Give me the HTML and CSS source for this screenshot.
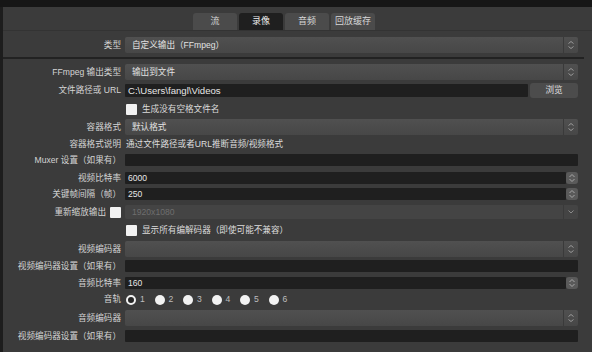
FILE: index.html
```html
<!DOCTYPE html>
<html>
<head>
  <title>输出设置 - 录像</title>
  <link rel="stylesheet" href="styles.css">
</head>
<body>

  <div class="window">
    <div class="tabs">
      <div class="tab">流</div>
      <div class="tab active">录像</div>
      <div class="tab">音频</div>
      <div class="tab">回放缓存</div>
    </div>

    <div class="form">
      <div class="row wide">
        <div class="lbl">类型</div>
        <div class="combo"><span class="combo-text">自定义输出（FFmpeg）</span><span class="combo-btn"><svg width="8" height="10" viewBox="0 0 8 10"><path d="M1.5 3.5 L4 1.5 L6.5 3.5 M1.5 6.5 L4 8.5 L6.5 6.5" fill="none" stroke="#9a9a9a" stroke-width="1"/></svg></span></div>
      </div>

      <div class="sep"></div>

      <div class="row loose">
        <div class="lbl">FFmpeg 输出类型</div>
        <div class="combo"><span class="combo-text">输出到文件</span><span class="combo-btn"><svg width="8" height="10" viewBox="0 0 8 10"><path d="M1.5 3.5 L4 1.5 L6.5 3.5 M1.5 6.5 L4 8.5 L6.5 6.5" fill="none" stroke="#9a9a9a" stroke-width="1"/></svg></span></div>
      </div>

      <div class="row close">
        <div class="lbl">文件路径或 URL</div>
        <div class="path">
          <div class="input path-input">C:\Users\fangl\Videos</div>
          <div class="btn">浏览</div>
        </div>
      </div>

      <div class="row loose check-row">
        <div class="lbl"></div>
        <div class="check"><span class="box"></span>生成没有空格文件名</div>
      </div>

      <div class="row">
        <div class="lbl">容器格式</div>
        <div class="combo"><span class="combo-text">默认格式</span><span class="combo-btn"><svg width="8" height="10" viewBox="0 0 8 10"><path d="M1.5 3.5 L4 1.5 L6.5 3.5 M1.5 6.5 L4 8.5 L6.5 6.5" fill="none" stroke="#9a9a9a" stroke-width="1"/></svg></span></div>
      </div>

      <div class="row close text-row">
        <div class="lbl">容器格式说明</div>
        <div class="note">通过文件路径或者URL推断音频/视频格式</div>
      </div>

      <div class="row">
        <div class="lbl">Muxer 设置（如果有）</div>
        <div class="input"></div>
      </div>

      <div class="row wide">
        <div class="lbl">视频比特率</div>
        <div class="spin"><div class="input">6000</div><span class="spin-btn"><svg width="8" height="10" viewBox="0 0 8 10"><path d="M1.5 4 L4 1.5 L6.5 4 M1.5 6 L4 8.5 L6.5 6" fill="none" stroke="#a8a8a8" stroke-width="1"/></svg></span></div>
      </div>

      <div class="row">
        <div class="lbl">关键帧间隔（帧）</div>
        <div class="spin"><div class="input">250</div><span class="spin-btn"><svg width="8" height="10" viewBox="0 0 8 10"><path d="M1.5 4 L4 1.5 L6.5 4 M1.5 6 L4 8.5 L6.5 6" fill="none" stroke="#a8a8a8" stroke-width="1"/></svg></span></div>
      </div>

      <div class="row loose">
        <div class="lbl lbl-check">重新缩放输出<span class="box"></span></div>
        <div class="combo disabled"><span class="combo-text">1920x1080</span><span class="combo-btn"><svg width="8" height="6" viewBox="0 0 8 6"><path d="M1.5 1.5 L4 4 L6.5 1.5" fill="none" stroke="#8a8a8a" stroke-width="1"/></svg></span></div>
      </div>

      <div class="row loose check-row">
        <div class="lbl"></div>
        <div class="check"><span class="box"></span>显示所有编解码器（即使可能不兼容）</div>
      </div>

      <div class="row loose">
        <div class="lbl">视频编码器</div>
        <div class="combo"><span class="combo-text"></span><span class="combo-btn"><svg width="8" height="10" viewBox="0 0 8 10"><path d="M1.5 3.5 L4 1.5 L6.5 3.5 M1.5 6.5 L4 8.5 L6.5 6.5" fill="none" stroke="#9a9a9a" stroke-width="1"/></svg></span></div>
      </div>

      <div class="row close">
        <div class="lbl">视频编码器设置（如果有）</div>
        <div class="input"></div>
      </div>

      <div class="row loose">
        <div class="lbl">音频比特率</div>
        <div class="spin"><div class="input">160</div><span class="spin-btn"><svg width="8" height="10" viewBox="0 0 8 10"><path d="M1.5 4 L4 1.5 L6.5 4 M1.5 6 L4 8.5 L6.5 6" fill="none" stroke="#a8a8a8" stroke-width="1"/></svg></span></div>
      </div>

      <div class="row loose radio-row">
        <div class="lbl">音轨</div>
        <div class="tracks">
          <span class="track"><span class="radio on"></span>1</span>
          <span class="track"><span class="radio"></span>2</span>
          <span class="track"><span class="radio"></span>3</span>
          <span class="track"><span class="radio"></span>4</span>
          <span class="track"><span class="radio"></span>5</span>
          <span class="track"><span class="radio"></span>6</span>
        </div>
      </div>

      <div class="row loose">
        <div class="lbl">音频编码器</div>
        <div class="combo"><span class="combo-text"></span><span class="combo-btn"><svg width="8" height="10" viewBox="0 0 8 10"><path d="M1.5 3.5 L4 1.5 L6.5 3.5 M1.5 6.5 L4 8.5 L6.5 6.5" fill="none" stroke="#9a9a9a" stroke-width="1"/></svg></span></div>
      </div>

      <div class="row">
        <div class="lbl">视频编码器设置（如果有）</div>
        <div class="input"></div>
      </div>
    </div>
  </div>

</body>
</html>
```

FILE: styles.css
```css
/* Dark settings panel */
body {
  margin: 0;
  background: #161616;
  font: 8.6px/1 "Liberation Sans", "Noto Sans CJK SC", sans-serif;
  color: #dcdcdc;
}
.window {
  margin-top: 7px;
  border-left: 3px solid #1d1d1d;
  background: #3b3b3b;
  height: 345px;
}

/* Tabs */
.tabs {
  display: flex;
  gap: 2px;
  padding: 6px 0 0 190px;
}
.tab {
  width: 44px;
  height: 17px;
  background: #4b4b4b;
  border-radius: 3px 3px 0 0;
  display: flex;
  align-items: center;
  justify-content: center;
  font-size: 9px;
  color: #d6d6d6;
}
.tab.active {
  background: #1f1f1f;
  color: #eeeeee;
}
.form {
  border-top: 1px solid #333333;
}

/* Rows */
.row {
  display: grid;
  grid-template-columns: 118px 453px;
  column-gap: 4px;
  align-items: center;
  margin-top: 4px;
}
.row.close { margin-top: 3px; }
.row.loose { margin-top: 5px; }
.row.wide { margin-top: 6px; }
.lbl {
  text-align: right;
  white-space: nowrap;
  color: #d4d4d4;
}
.lbl-check {
  display: flex;
  justify-content: flex-end;
  align-items: center;
  gap: 4px;
}
.sep {
  margin: 4px 8px 0 0;
  height: 2px;
  background: #222222;
}

/* Combo box */
.combo {
  height: 16px;
  display: flex;
  align-items: center;
  background: linear-gradient(#505050, #474747);
  border-radius: 2px;
}
.combo-text {
  flex: 1;
  padding-left: 7px;
  color: #e2e2e2;
}
.combo-btn {
  width: 14px;
  height: 100%;
  border-left: 1px solid #3a3a3a;
  display: flex;
  align-items: center;
  justify-content: center;
}
.combo.disabled {
  height: 14px;
  background: #444444;
}
.combo.disabled .combo-text {
  color: #6e6e6e;
}

/* Text inputs */
.input {
  height: 12px;
  background: #1f1f1f;
  border-radius: 1px;
  padding-left: 3px;
  display: flex;
  align-items: center;
  color: #e6e6e6;
}
.path {
  display: flex;
  gap: 2px;
  align-items: center;
}
.path-input {
  flex: 1;
  height: 13px;
  font-size: 9.6px;
}
.btn {
  width: 48px;
  height: 15px;
  background: #4c4c4c;
  border-radius: 3px;
  display: flex;
  align-items: center;
  justify-content: center;
  color: #e0e0e0;
}
.spin {
  display: flex;
  align-items: center;
}
.spin .input {
  flex: 1;
}
.spin-btn {
  width: 12px;
  height: 12px;
  background: #5a5a5a;
  border-radius: 3px;
  display: flex;
  align-items: center;
  justify-content: center;
}

/* Checkbox and note */
.check-row, .text-row {
  height: 12px;
}
.check {
  display: flex;
  align-items: center;
  gap: 5px;
  padding-left: 1px;
}
.box {
  width: 11px;
  height: 11px;
  background: #f2f2f2;
  border-radius: 1px;
}
.note {
  padding-left: 1px;
}

/* Audio tracks */
.radio-row {
  height: 11px;
}
.tracks {
  display: flex;
  padding-left: 1px;
}
.track {
  width: 28.5px;
  display: flex;
  align-items: center;
  gap: 4px;
  color: #bdbdbd;
}
.radio {
  width: 10px;
  height: 10px;
  border-radius: 50%;
  background: #f2f2f2;
}
.radio.on {
  width: 6px;
  height: 6px;
  background: #262626;
  border: 2px solid #f2f2f2;
}
```
